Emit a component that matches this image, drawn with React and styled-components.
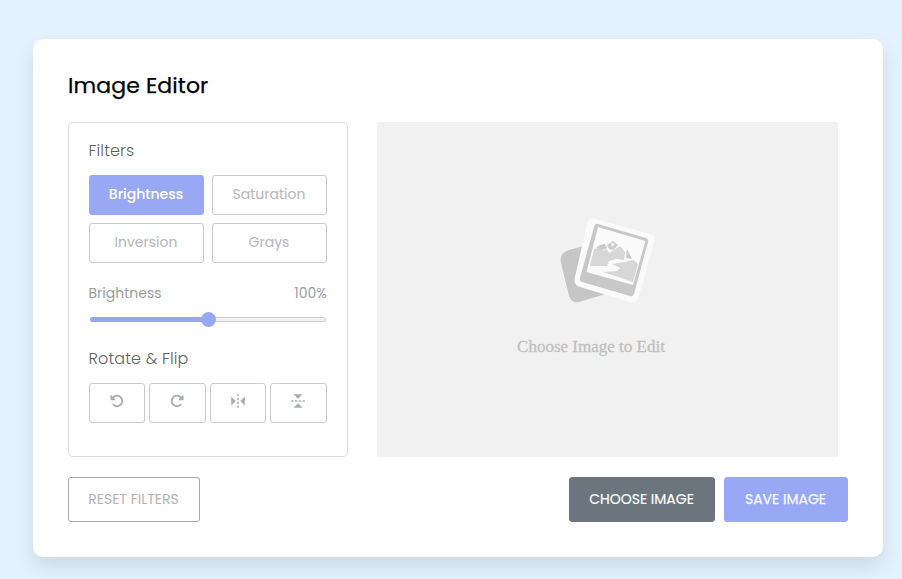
import React from "react";
import styled, { createGlobalStyle } from "styled-components";
import { FaRotateLeft, FaRotateRight } from "react-icons/fa6";
import { BiReflectVertical, BiReflectHorizontal } from "react-icons/bi";

const GlobalStyle = createGlobalStyle`
  *, *::before, *::after { box-sizing: border-box; }
  body {
    margin: 0;
    height: 579px;
    overflow: hidden;
    background: #e3f2fd;
    font-family: "Poppins", "Inter", sans-serif;
  }
  button { font: inherit; }
`;

const Card = styled.main`
  width: 850px;
  height: 518px;
  margin: 39px 0 0 33px;
  padding: 30px 35px 35px;
  border-radius: 10px;
  background: #fff;
  box-shadow: 0 10px 20px rgba(0, 0, 0, 0.1);
`;

const Title = styled.h2`
  margin: 0 0 20px;
  height: 33px;
  line-height: 33px;
  font-size: 22px;
  font-weight: 400;
  letter-spacing: 0.1px;
  -webkit-text-stroke: 0.25px #000;
  color: #000;
`;

const Workspace = styled.div`
  display: flex;
  gap: 29px;
  height: 335px;
`;

const Panel = styled.section`
  width: 280px;
  flex: none;
  padding: 15px 20px;
  border: 1px solid #dddedf;
  border-radius: 5px;
`;

const Heading = styled.h3`
  margin: 0 0 0 -0.5px;
  height: 24px;
  line-height: 25px;
  font-size: 16px;
  font-weight: 300;
  letter-spacing: 0.15px;
  color: #626262;
`;

const FilterGrid = styled.div`
  display: grid;
  grid-template-columns: 1fr 1fr;
  gap: 8px;
  margin-top: 13px;
`;

const OptionButton = styled.button`
  display: flex;
  align-items: center;
  justify-content: center;
  height: 40px;
  padding: 0 1px 2px 0;
  border: 1px solid ${(p) => (p.$active ? "#98a8f5" : "#c8cacc")};
  border-radius: 3px;
  background: ${(p) => (p.$active ? "#98a8f5" : "#fff")};
  color: ${(p) => (p.$active ? "#fff" : "#b4b6b9")};
  font-size: 14px;
  font-weight: ${(p) => (p.$active ? 500 : 400)};
`;

const IconButton = styled(OptionButton)`
  padding: 0 1px 4px 0;
  color: #a9abaf;
`;

const SliderInfo = styled.div`
  display: flex;
  justify-content: space-between;
  height: 21px;
  margin: 20px 0 0 -0.5px;
  line-height: 21px;
  font-size: 14px;
  font-weight: 400;
  color: #9c9c9c;
`;

const Track = styled.div`
  position: relative;
  height: 5px;
  margin: 13px 1px 0;
  border: 1px solid #cfcfcf;
  border-radius: 3px;
  background: #f1f1f1;
`;

const Fill = styled.div`
  position: absolute;
  inset: -1px auto -1px -1px;
  width: 50%;
  border-radius: 3px;
  background: #97a7ea;
`;

const Thumb = styled.div`
  position: absolute;
  top: -6px;
  left: calc(50% - 7.5px);
  width: 15px;
  height: 15px;
  border-radius: 50%;
  background: #98a8f5;
`;

const RotateSection = styled.div`
  margin-top: 24px;
`;

const RotateRow = styled.div`
  display: grid;
  grid-template-columns: 56px 57px 56px 57px;
  gap: 4px;
  margin-top: 13px;
`;

const Preview = styled.section`
  width: 461px;
  padding: 88px 33px 0 0;
  background: #f1f1f1;
  display: flex;
  flex-direction: column;
  align-items: center;
`;

const Caption = styled.p`
  margin: 24px 0 0;
  font: 17px/26px "Liberation Serif", serif;
  color: #c0c0c0;
  -webkit-text-stroke: 0.3px #c0c0c0;
`;

const PhotoSvg = styled.svg`
  width: 110px;
  height: 100px;
  margin-left: 29px;
  flex: none;
`;

const Footer = styled.footer`
  display: flex;
  align-items: center;
  margin-top: 20px;
`;

const ActionButton = styled.button`
  width: ${(p) => p.$width};
  height: 45px;
  padding: 0 1px 0 0;
  border: 1px solid ${(p) => p.$border};
  border-radius: 3px;
  background: ${(p) => p.$fill};
  color: ${(p) => p.$color};
  font-size: 14px;
  font-weight: 400;
  -webkit-text-stroke: ${(p) => p.$stroke || "0"} ${(p) => p.$color};
  white-space: nowrap;
`;

const EndActions = styled.div`
  display: flex;
  gap: 9px;
  margin-left: auto;
`;

function PhotoStack() {
  return (
    <PhotoSvg viewBox="0 0 110 100" aria-hidden="true">
      <path d="M18 40 L36 35 L58 83 L28 92 Q21 94 18 86 L10 53 Q8 43 18 40Z" fill="#c6c6c6" />
      <path d="M44 9 L99 24 Q105 26 103 33 L88 86 Q86 94 79 92 L29 77 Q22 75 24 67 L36 14 Q38 7 44 9Z" fill="#fafafa" />
      <path d="M47 14 L95 28 Q98 29 97 32 L83 84 Q82 87 79 86 L31 72 Q28 71 29 68 L43 17 Q44 13 47 14Z" fill="#c8c8c8" />
      <path d="M47 17 L94.5 31 L82 75 L35.5 62Z" fill="#fafafa" />
      <path d="M39 56 L43 39 L50 38 L52 41 L56 39 L58 43 L69 36 L74 42 L73 50 L65 49 L58 51 L56 56Z" fill="#d7d7d7" />
      <path d="M74 52 L82 50 L87 54 L82 72 L52 62 L66 61 L69 58 L61 54Z" fill="#d7d7d7" />
      <path d="M45 38 Q49 34 54 34 L56 38 L52 40Z M56 35 L62 31 L67 35 L62 40 L58 39Z M76 39 L81 49 L75 48Z" fill="#cacaca" />
      <path d="M60 33 L61 37 L64 34Z" fill="#fafafa" />
    </PhotoSvg>
  );
}

export default function App() {
  return (
    <>
      <GlobalStyle />
      <Card>
        <Title>Image Editor</Title>
        <Workspace>
          <Panel>
            <Heading>Filters</Heading>
            <FilterGrid>
              <OptionButton $active>Brightness</OptionButton>
              <OptionButton>Saturation</OptionButton>
              <OptionButton>Inversion</OptionButton>
              <OptionButton>Grays</OptionButton>
            </FilterGrid>
            <SliderInfo>
              <span>Brightness</span>
              <span>100%</span>
            </SliderInfo>
            <Track>
              <Fill />
              <Thumb />
            </Track>
            <RotateSection>
              <Heading>Rotate &amp; Flip</Heading>
              <RotateRow>
                <IconButton aria-label="Rotate left"><FaRotateLeft size={14} /></IconButton>
                <IconButton aria-label="Rotate right"><FaRotateRight size={14} /></IconButton>
                <IconButton aria-label="Flip horizontally"><BiReflectVertical size={18} /></IconButton>
                <IconButton aria-label="Flip vertically"><BiReflectHorizontal size={18} /></IconButton>
              </RotateRow>
            </RotateSection>
          </Panel>
          <Preview>
            <PhotoStack />
            <Caption>Choose Image to Edit</Caption>
          </Preview>
        </Workspace>
        <Footer>
          <ActionButton $width="132px" $border="#a5a8ac" $fill="#fff" $color="#b1b3b7">RESET FILTERS</ActionButton>
          <EndActions>
            <ActionButton $width="146px" $border="#6c757d" $fill="#6c757d" $color="#fff" $stroke="0.15px">CHOOSE IMAGE</ActionButton>
            <ActionButton $width="124px" $border="#98a8f5" $fill="#98a8f5" $color="#f7f8ff" $stroke="0.25px">SAVE IMAGE</ActionButton>
          </EndActions>
        </Footer>
      </Card>
    </>
  );
}
